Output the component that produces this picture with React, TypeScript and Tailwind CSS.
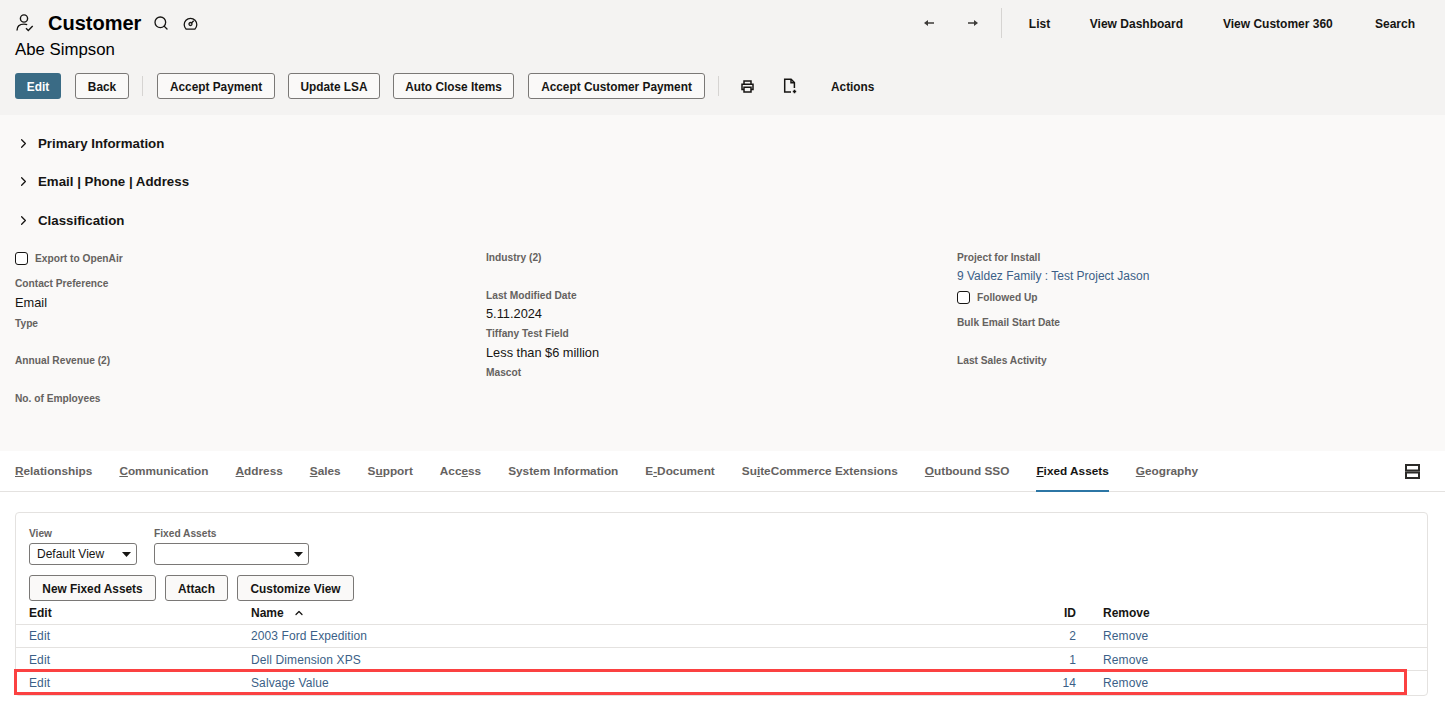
import { ChevronRight, ChevronUp, Search } from "lucide-react"

const sans = "font-['Liberation_Sans',Arial,sans-serif]"

function ToolButton({ label, width }: { label: string; width: string }) {
  return (
    <button
      className={
        "h-[26px] pt-[3px] rounded-[3px] border border-[#7a7876] bg-[#faf9f8] text-[#161513] text-[11.85px] font-bold " + width
      }
    >
      {label}
    </button>
  )
}

function UserCheckIcon() {
  return (
    <svg width="20" height="20" viewBox="0 0 20 20" fill="none" stroke="#161513" strokeWidth="1.4">
      <circle cx="9" cy="5.5" r="3.6" />
      <path d="M2 17.5c0-4 2.8-6.4 7-6.4 1.2 0 2.3.2 3.2.6" />
      <path d="M11 15.2l2.3 2.4 4.4-4.6" />
    </svg>
  )
}

function GaugeIcon() {
  return (
    <svg width="15" height="15" viewBox="0 0 15 15" fill="none" stroke="#161513" strokeWidth="1.3">
      <path d="M3.2 13.2a6.3 6.3 0 1 1 8.6 0z" />
      <circle cx="7.5" cy="8" r="1.5" />
      <path d="M8.5 7l2.2-2.2" />
    </svg>
  )
}

function PrinterIcon() {
  return (
    <svg width="13" height="13" viewBox="0 0 13 13" fill="none" stroke="#161513" strokeWidth="1.5">
      <path d="M3 4V1h7v3" />
      <path d="M3 9.5H1V4.2h11v5.3h-2" />
      <path d="M3 7.2h7V12H3z" />
    </svg>
  )
}

function FileAddIcon() {
  return (
    <svg width="15" height="16" viewBox="0 0 15 16" fill="none" stroke="#161513" strokeWidth="1.5">
      <path d="M8 14H1.7V1.2h6.4l3.3 3.3V10" />
      <path d="M8 1.2v3.5h3.4" />
      <path d="M11.5 11.8v3.4M9.8 13.5h3.4" />
    </svg>
  )
}

function Arrow({ right }: { right?: boolean }) {
  return (
    <svg width="10" height="8" viewBox="0 0 10 8" fill="#3d3b39">
      {right ? <path d="M0 3.2h6V1l4 3-4 3V4.8H0z" /> : <path d="M10 3.2H4V1L0 4l4 3V4.8h6z" />}
    </svg>
  )
}

function Section({ title, className }: { title: string; className: string }) {
  return (
    <div className={"flex items-center " + className}>
      <ChevronRight size={15} strokeWidth={2} className="text-[#161513] ml-[1px] mr-[7px]" />
      <span className="pt-[2px] text-[13.3px] font-bold text-[#161513]">{title}</span>
    </div>
  )
}

function Label({ children }: { children: string }) {
  return <div className="pt-px text-[10.2px] leading-[14px] font-bold text-[#65625f]">{children}</div>
}

function Field({
  label,
  value,
  link,
  valueGap,
  className,
}: {
  label: string
  value?: string
  link?: boolean
  valueGap?: string
  className: string
}) {
  return (
    <div className={className}>
      <Label>{label}</Label>
      {value && (
        <div
          className={
            link
              ? "mt-[3px] text-xs leading-[16px] text-[#3b5f87]"
              : "text-[12.8px] leading-[18px] text-[#161513] " + (valueGap || "mt-[2px]")
          }
        >
          {value}
        </div>
      )}
    </div>
  )
}

function CheckField({ label, className }: { label: string; className: string }) {
  return (
    <div className={"flex items-center gap-[7px] " + className}>
      <span className="w-[13px] h-[13px] rounded-[3px] border border-[#161513] bg-white" />
      <Label>{label}</Label>
    </div>
  )
}

const tabs = [
  ["", "R", "elationships"],
  ["", "C", "ommunication"],
  ["", "A", "ddress"],
  ["", "S", "ales"],
  ["S", "u", "pport"],
  ["Acc", "e", "ss"],
  ["System Information", "", ""],
  ["E", "-", "Document"],
  ["Su", "i", "teCommerce Extensions"],
  ["", "O", "utbound SSO"],
  ["", "F", "ixed Assets"],
  ["", "G", "eography"],
]

function Select({ text, width }: { text?: string; width: string }) {
  return (
    <div className={"h-[22px] flex items-center justify-between pl-[7px] pr-[4px] rounded-[3px] border border-[#7a7876] bg-white text-xs text-[#161513] " + width}>
      <span>{text}</span>
      <svg width="9" height="5" viewBox="0 0 9 5" className="mr-[1px]" fill="#161513">
        <path d="M0 0h9L4.5 5z" />
      </svg>
    </div>
  )
}

const rows = [
  { name: "2003 Ford Expedition", id: "2" },
  { name: "Dell Dimension XPS", id: "1" },
  { name: "Salvage Value", id: "14" },
]

const rowGrid = "grid grid-cols-[222px_798px_27px_auto] px-[13px] text-xs"

export default function App() {
  return (
    <div className={"w-[1445px] h-[707px] overflow-hidden bg-white " + sans}>
      {/* page header */}
      <div className="h-[115px] bg-[#f4f3f2] px-[15px] pt-2">
        <div className="h-[30px] flex items-center">
          <UserCheckIcon />
          <h1 className="ml-[13px] text-xl font-bold text-[#000]">Customer</h1>
          <Search size={16} strokeWidth={2} className="ml-[12px] text-[#161513]" />
          <span className="ml-[14px] flex">
            <GaugeIcon />
          </span>
          <div className="ml-auto flex items-center h-[30px] pr-[15px]">
            <Arrow />
            <span className="ml-[34px] flex">
              <Arrow right />
            </span>
            <span className="ml-[23px] w-px h-[30px] bg-[#d6d4d2]" />
            <nav className="ml-[27px] pt-px flex gap-10 text-xs font-bold text-[#161513]">
              <span className="w-[21px]">List</span>
              <span>View Dashboard</span>
              <span className="w-[112px]">View Customer 360</span>
              <span>Search</span>
            </nav>
          </div>
        </div>
        <div className="mt-[1px] text-[16.8px] leading-[22px] text-[#000]">Abe Simpson</div>
        <div className="mt-[12px] flex items-center">
          <button className="h-[26px] w-[46px] pt-[3px] rounded-[3px] bg-[#3a6b85] text-white text-[11.85px] font-bold">Edit</button>
          <span className="ml-[14px] flex"><ToolButton label="Back" width="w-[54px]" /></span>
          <span className="ml-[13px] mr-[14px] w-px h-5 bg-[#d6d4d2]" />
          <div className="flex gap-[13px]">
            <ToolButton label="Accept Payment" width="w-[118px]" />
            <ToolButton label="Update LSA" width="w-[92px]" />
            <ToolButton label="Auto Close Items" width="w-[121px]" />
            <span className="ml-px flex"><ToolButton label="Accept Customer Payment" width="w-[177px]" /></span>
          </div>
          <span className="mx-[13px] w-px h-5 bg-[#d6d4d2]" />
          <span className="ml-[9px] flex"><PrinterIcon /></span>
          <span className="ml-[29px] flex"><FileAddIcon /></span>
          <span className="ml-[33px] pt-[3px] text-[11.85px] font-bold text-[#161513]">Actions</span>
        </div>
      </div>

      {/* field groups */}
      <div className="h-[336px] bg-[#faf9f8] px-[15px] pt-[17px]">
        <Section title="Primary Information" className="h-[22px]" />
        <Section title="Email | Phone | Address" className="h-[22px] mt-[16px]" />
        <Section title="Classification" className="h-[22px] mt-[17px]" />
        <div className="mt-[19px] grid grid-cols-[471px_471px_1fr]">
          <div className="flex flex-col">
            <CheckField label="Export to OpenAir" className="h-[25px] pb-[8px]" />
            <Field label="Contact Preference" value="Email" valueGap="mt-[3px]" className="h-[41px] pt-[1px]" />
            <Field label="Type" className="h-[37px]" />
            <Field label="Annual Revenue (2)" className="h-[38px]" />
            <Field label="No. of Employees" className="h-[38px]" />
          </div>
          <div className="flex flex-col">
            <Field label="Industry (2)" className="h-[38px]" />
            <Field label="Last Modified Date" value="5.11.2024" className="h-[38px]" />
            <Field label="Tiffany Test Field" value="Less than $6 million" valueGap="mt-[3px]" className="h-[39px]" />
            <Field label="Mascot" className="h-[38px]" />
          </div>
          <div className="flex flex-col">
            <Field label="Project for Install" value="9 Valdez Family : Test Project Jason" link className="h-[40px]" />
            <CheckField label="Followed Up" className="h-[24px] -mt-[1px] pb-[7px]" />
            <Field label="Bulk Email Start Date" className="h-[38px] pt-[2px]" />
            <Field label="Last Sales Activity" className="h-[38px] pt-[2px]" />
          </div>
        </div>
      </div>

      {/* subtabs */}
      <div className="h-[41px] border-b border-[#e4e2e0] px-[15px] flex items-stretch gap-[27px]">
        {tabs.map(([before, key, after], i) => {
          const active = i === 10
          return (
            <div
              key={i}
              className={
                active
                  ? "flex items-center pt-[2px] text-[11.8px] font-bold text-[#161513] border-b-2 border-[#2c76a5] -mb-px"
                  : "flex items-center pt-[2px] text-[11.8px] font-bold text-[#65625f]"
              }
            >
              <span>
                {before}
                {key && <u>{key}</u>}
                {after}
              </span>
            </div>
          )
        })}
        <div className="ml-auto flex items-center pr-[10px]">
          <svg width="15" height="15" viewBox="0 0 15 15" fill="none" stroke="#2b2a28" strokeWidth="2">
            <rect x="1" y="1" width="13" height="5.5" />
            <rect x="1" y="8.5" width="13" height="5.5" />
          </svg>
        </div>
      </div>

      {/* fixed assets panel */}
      <div className="px-[15px] pt-5">
        <div className="w-[1413px] h-[184px] rounded-[4px] border border-[#e4e2e0] pt-[14px]">
          <div className="px-[13px] flex gap-[17px]">
            <div>
              <div className="pt-px text-[10.2px] leading-[12px] mb-[3px] font-bold text-[#65625f]">View</div>
              <Select text="Default View" width="w-[108px]" />
            </div>
            <div>
              <div className="pt-px text-[10.2px] leading-[12px] mb-[3px] font-bold text-[#65625f]">Fixed Assets</div>
              <Select width="w-[155px]" />
            </div>
          </div>
          <div className="mt-[10px] px-[13px] flex gap-[9px]">
            <ToolButton label="New Fixed Assets" width="w-[127px]" />
            <ToolButton label="Attach" width="w-[63px]" />
            <ToolButton label="Customize View" width="w-[117px]" />
          </div>
          <div className={rowGrid + " h-[24px] items-center font-bold text-[#161513] border-b border-[#e4e2e0]"}>
            <span>Edit</span>
            <span className="flex items-center gap-[9px]">
              Name <ChevronUp size={12} strokeWidth={2.5} />
            </span>
            <span className="text-right">ID</span>
            <span className="pl-[27px]">Remove</span>
          </div>
          {rows.map((row, i) => (
            <div
              key={row.id}
              className={
                rowGrid +
                " relative h-[23px] items-center tracking-[0.1px] text-[#3b5f87]" +
                (i < 2 ? " border-b border-[#e4e2e0]" : "") +
                (i === 1 ? " pt-px" : "")
              }
            >
              <span>Edit</span>
              <span>{row.name}</span>
              <span className="text-right">{row.id}</span>
              <span className="pl-[27px]">Remove</span>
              {i === 2 && (
                <div className="absolute -left-[2px] top-[-2px] w-[1393px] h-[26px] border-[3px] border-[#fb4141]" />
              )}
            </div>
          ))}
        </div>
      </div>
    </div>
  )
}
